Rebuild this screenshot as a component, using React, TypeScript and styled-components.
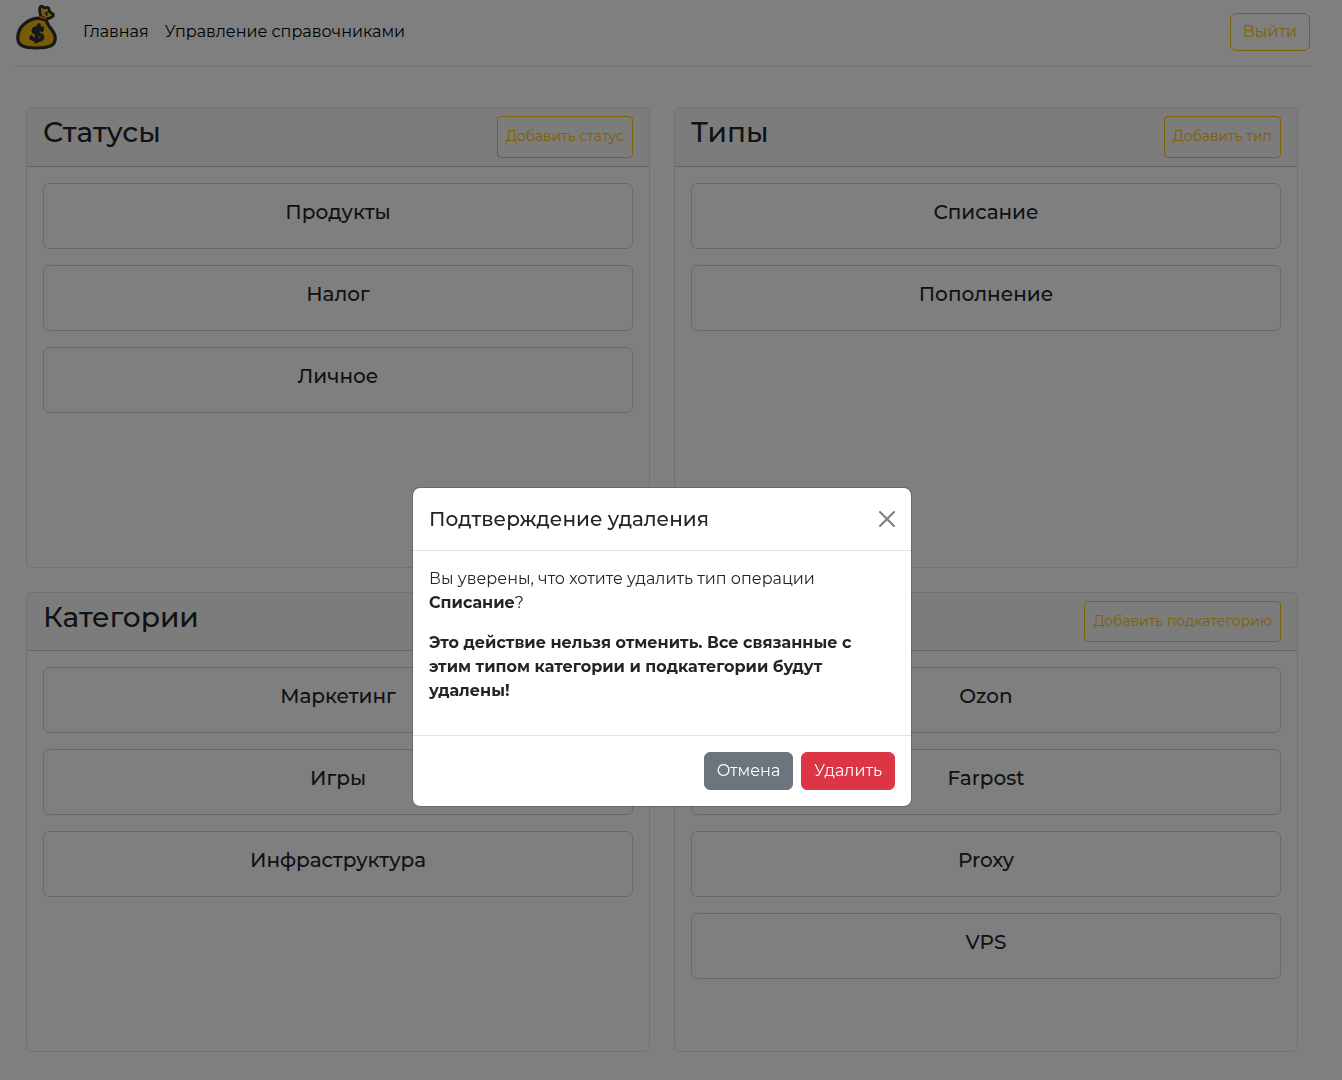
import React from "react";
import styled, { createGlobalStyle } from "styled-components";

const GlobalStyle = createGlobalStyle`
  *, *::before, *::after { box-sizing: border-box; }
  html, body { margin: 0; height: 1080px; overflow: hidden; }
  body {
    background: #fff;
    color: #212529;
    font-family: Montserrat, Inter, "Noto Sans", sans-serif;
    font-size: 16px;
    font-weight: 400;
    line-height: 1.5;
  }
  button { font-family: inherit; line-height: 1.5; }
`;

const Page = styled.div`
  width: 1324px;
  padding: 0 14px;
`;

const Header = styled.header`
  display: flex;
  align-items: center;
  height: 67px;
  padding-bottom: 3px;
  margin-bottom: 16px;
  border-bottom: 1px solid #dee2e6;
`;

const Logo = styled.svg`
  width: 46px;
  height: 50px;
  flex: none;
  margin: -13px 15px 0 0;
`;

const Nav = styled.nav`
  display: flex;
  flex: 1;
`;

const NavLink = styled.a`
  padding: 0 8px;
  color: #000;
  text-decoration: none;
  white-space: nowrap;
`;

const OutlineButton = styled.button`
  padding: 6px 12px;
  border: 1px solid #ffc107;
  border-radius: 6px;
  background: transparent;
  color: #ffc107;
  font-size: 16px;
  font-weight: 400;
  white-space: nowrap;
`;

const AddButton = styled(OutlineButton)`
  align-self: stretch;
  padding: 4px 8px;
  border-radius: 4px;
  font-size: 14px;
`;

const Grid = styled.main`
  display: grid;
  grid-template-columns: 624px 624px;
  gap: 24px;
  padding: 24px 12px;
`;

const Card = styled.section`
  height: 460.6px;
  border: 1px solid #dee2e6;
  border-radius: 6px;
  overflow: hidden;
`;

const CardHeader = styled.div`
  display: flex;
  justify-content: space-between;
  height: 58.6px;
  padding: 8px 16px;
  background: rgba(33, 37, 41, 0.03);
  border-bottom: 1px solid rgba(0, 0, 0, 0.175);
`;

const CardTitle = styled.h3`
  margin: 0 0 8px;
  font-size: 28px;
  font-weight: 500;
  line-height: 1.2;
`;

const CardBody = styled.div`
  display: flex;
  flex-direction: column;
  gap: 16px;
  padding: 16px;
`;

const Item = styled.div`
  height: 66px;
  padding: 16px;
  border: 1px solid rgba(0, 0, 0, 0.175);
  border-radius: 6px;
  font-size: 20px;
  font-weight: 500;
  line-height: 24px;
  text-align: center;
`;

const Backdrop = styled.div`
  position: fixed;
  inset: 0;
  background: rgba(0, 0, 0, 0.5);
`;

const ModalLayer = styled.div`
  position: fixed;
  inset: 0;
  display: flex;
  justify-content: center;
  align-items: flex-start;
  padding: 487px 18px 0 0;
`;

const Dialog = styled.div`
  width: 500px;
  border: 1px solid rgba(0, 0, 0, 0.175);
  border-radius: 8px;
  background: #fff;
  background-clip: padding-box;
`;

const DialogHeader = styled.div`
  display: flex;
  align-items: center;
  justify-content: space-between;
  height: 63px;
  padding: 0 15px 0 16px;
  border-bottom: 1px solid #dee2e6;
`;

const DialogTitle = styled.h5`
  margin: 0;
  font-size: 20px;
  font-weight: 500;
  line-height: 30px;
`;

const CloseButton = styled.button`
  display: flex;
  padding: 0;
  border: 0;
  background: transparent;
  opacity: 0.5;
`;

const DialogBody = styled.div`
  padding: 16px;
`;

const Paragraph = styled.p`
  margin: 0 0 16px;
`;

const Strong = styled.strong`
  font-weight: 700;
`;

const DialogFooter = styled.div`
  display: flex;
  justify-content: flex-end;
  gap: 8px;
  height: 71px;
  padding: 16px;
  border-top: 1px solid #dee2e6;
`;

const SolidButton = styled.button<{ $color: string }>`
  height: 38px;
  padding: 6px 12px;
  border: 1px solid ${(p) => p.$color};
  border-radius: 6px;
  background: ${(p) => p.$color};
  color: #fff;
  font-size: 16px;
  font-weight: 400;
`;

interface Section {
  title: string;
  action: string;
  items: string[];
}

const sections: Section[] = [
  { title: "Статусы", action: "Добавить статус", items: ["Продукты", "Налог", "Личное"] },
  { title: "Типы", action: "Добавить тип", items: ["Списание", "Пополнение"] },
  { title: "Категории", action: "Добавить категорию", items: ["Маркетинг", "Игры", "Инфраструктура"] },
  { title: "Подкатегории", action: "Добавить подкатегорию", items: ["Ozon", "Farpost", "Proxy", "VPS"] },
];

function MoneyBag() {
  return (
    <Logo viewBox="0 0 46 50" aria-hidden="true">
      <g stroke="#2e2e2e" strokeLinejoin="round" strokeLinecap="round">
        <path
          d="M26.8 16.5C25.9 12.5 24.9 9.8 26 7.2C26.8 5.6 28.4 5.8 29.4 7.5L31.4 7.6C33.2 7 35.6 8 35 9.8L37.2 13.2C39.8 13.5 40.2 15.9 38.2 16.8C36 18.3 33.8 18.9 31.9 18.8Z"
          fill="#f2bb18"
          strokeWidth="2.7"
        />
        <path
          d="M24.7 18.2C12.8 18.8 3.7 27.5 3.8 38C3.9 45.8 9.8 48 22.5 48C35.2 48 41.2 45.6 41.3 38.4C41.3 33.4 37.9 29.7 35.6 26.9C33.6 24.4 33.4 21.8 31.5 19.8Z"
          fill="#f2b40f"
          strokeWidth="3.2"
        />
        <path d="M26.2 17L31.6 18.4" stroke="#dc6538" strokeWidth="2.3" />
        <path d="M32 13.4L35 11.6M32.9 15.1L31.2 13.1" fill="none" strokeWidth="1.5" />
        <path
          d="M27.9 29.8C26.5 27 20 27.2 19.5 30.8C19 34.3 28.3 33.4 28.4 36.8C28.4 41 21 41.2 17.3 37.8M24.8 25.2L22 41.6"
          fill="none"
          strokeWidth="4"
        />
        <path d="M28.6 27.5L28 31M17.5 36L17 39" fill="none" strokeWidth="2.6" />
      </g>
    </Logo>
  );
}

function SectionCard({ section }: { section: Section }) {
  return (
    <Card>
      <CardHeader>
        <CardTitle>{section.title}</CardTitle>
        <AddButton>{section.action}</AddButton>
      </CardHeader>
      <CardBody>
        {section.items.map((label) => (
          <Item key={label}>{label}</Item>
        ))}
      </CardBody>
    </Card>
  );
}

function DeleteDialog() {
  return (
    <ModalLayer>
      <Dialog role="dialog" aria-modal="true">
        <DialogHeader>
          <DialogTitle>Подтверждение удаления</DialogTitle>
          <CloseButton>
            <svg width="18" height="18" viewBox="0 0 18 18">
              <path d="M2 2L16 16M16 2L2 16" stroke="#000" strokeWidth="2.1" strokeLinecap="round" />
            </svg>
          </CloseButton>
        </DialogHeader>
        <DialogBody>
          <Paragraph>
            Вы уверены, что хотите удалить тип операции <Strong>Списание</Strong>?
          </Paragraph>
          <Paragraph>
            <Strong>
              Это действие нельзя отменить. Все связанные с этим типом категории и подкатегории будут удалены!
            </Strong>
          </Paragraph>
        </DialogBody>
        <DialogFooter>
          <SolidButton $color="#6c757d">Отмена</SolidButton>
          <SolidButton $color="#dc3545">Удалить</SolidButton>
        </DialogFooter>
      </Dialog>
    </ModalLayer>
  );
}

export default function App() {
  return (
    <>
      <GlobalStyle />
      <Page>
        <Header>
          <MoneyBag />
          <Nav>
            <NavLink>Главная</NavLink>
            <NavLink>Управление справочниками</NavLink>
          </Nav>
          <OutlineButton>Выйти</OutlineButton>
        </Header>
        <Grid>
          {sections.map((section) => (
            <SectionCard key={section.title} section={section} />
          ))}
        </Grid>
      </Page>
      <Backdrop />
      <DeleteDialog />
    </>
  );
}
